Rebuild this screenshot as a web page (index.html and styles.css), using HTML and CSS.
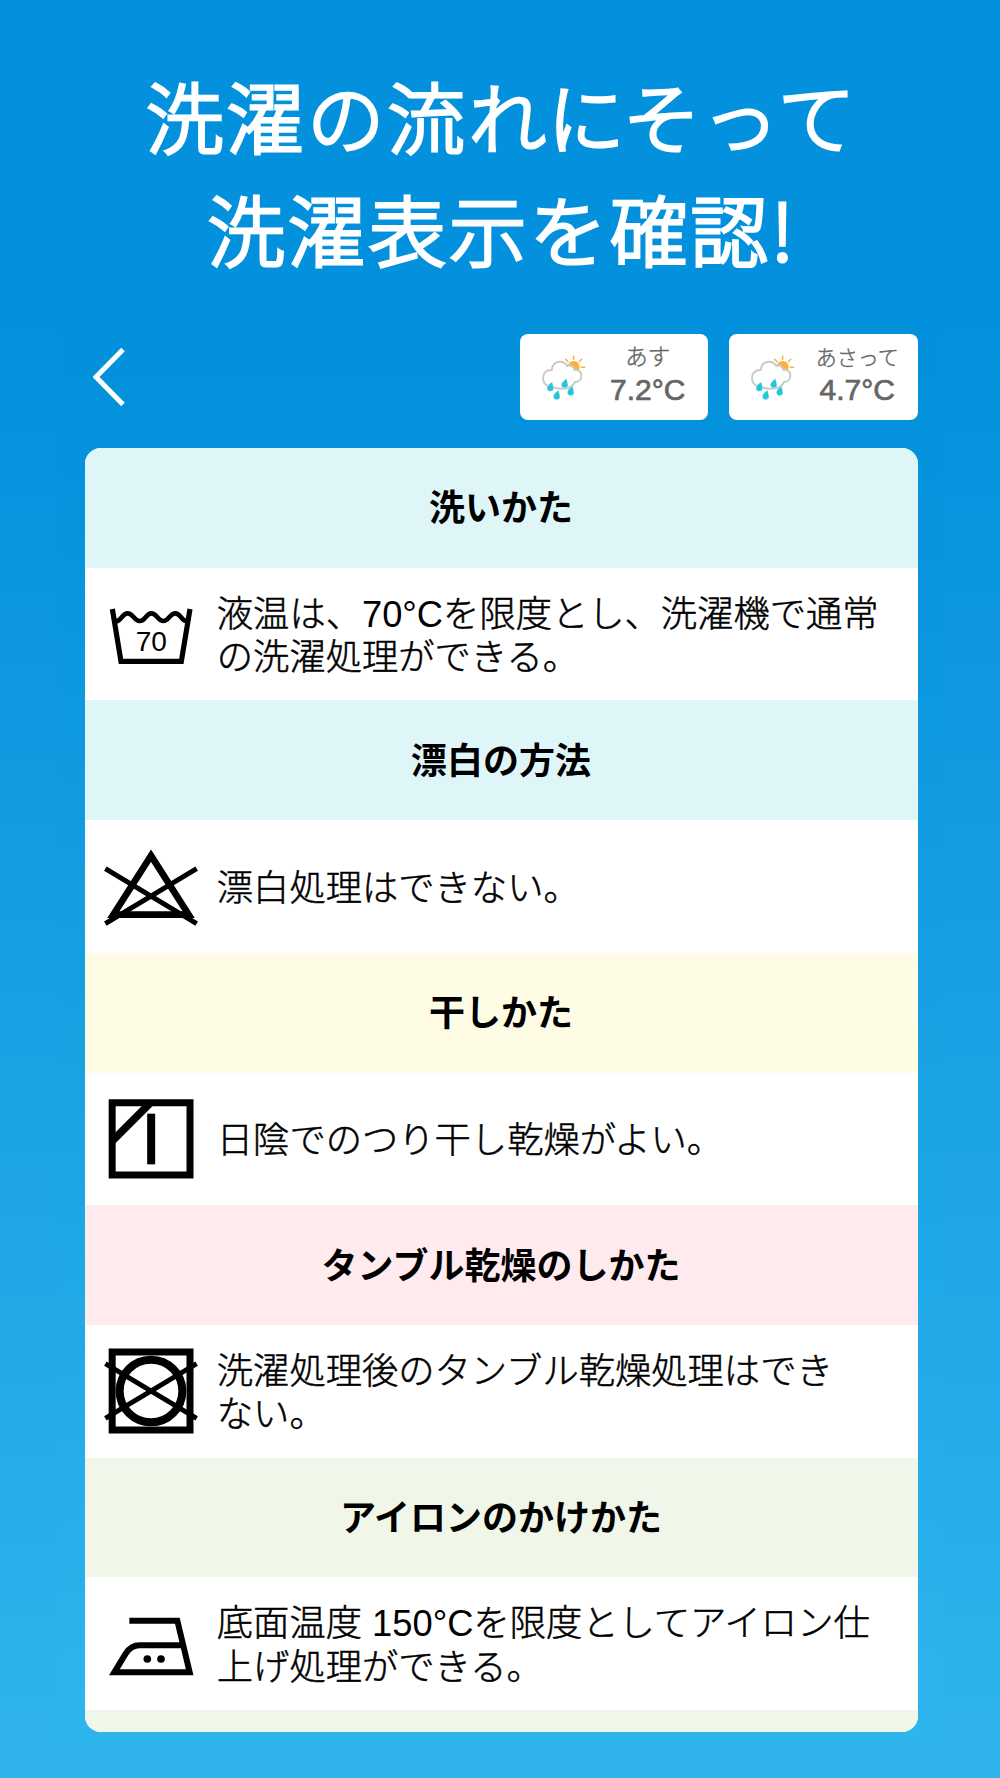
FILE: index.html
```html
<!DOCTYPE html>
<html lang="ja">
<head>
<meta charset="utf-8">
<title>洗濯表示</title>
<link rel="stylesheet" href="styles.css">
</head>
<body>
<svg width="0" height="0" class="defs">
  <symbol id="weather" viewBox="120 100 144 144">
    <g fill="none" stroke="#fbb040" stroke-width="4.500" stroke-linecap="round">
      <path d="M221 110v9M197 119l7 7M245 119l-7 7M244 142.500h10M240 160l4 5"/>
    </g>
    <circle cx="221" cy="142" r="18" fill="#fbb040"/>
    <path d="M152 200C136 198 129 187 129 174C129 160 140 150 155 151C156 136 166 126 179 126C190 126 198 131 202 139C208 135 220 139 223 150C237 149 244 158 244 168C244 180 235 187 225 187C218 203 200 207 189 207C174 207 163 206 152 200Z" fill="#fff" stroke="#c9caca" stroke-width="6"/>
    <g fill="#26c6da" stroke="#fff" stroke-width="1">
      <path id="drop" d="M157 187C148 192 141 199 141 205.500C141 211 145.500 215 151 215C156.500 215 161 211 161 206C161 201 158 194 157 187Z"/>
      <use href="#drop" x="43" y="-10"/>
      <use href="#drop" x="19" y="25"/>
      <use href="#drop" x="61" y="13"/>
    </g>
  </symbol>
</svg>
<main class="page">
  <h1 class="title">
    <span class="title-line first">洗濯の流<span class="kana">れに<span class="wide">そ</span><span class="mid">っ</span>て</span></span>
    <span class="title-line second">洗濯表示を確認!</span>
  </h1>
  <div class="app">
    <header class="bar">
      <svg class="back" viewBox="0 0 32 58"><path d="M30 1.500L3 29L30 56.500" fill="none" stroke="#fff" stroke-width="5"/></svg>
      <div class="forecast">
        <svg class="weather"><use href="#weather"/></svg>
        <div class="reading"><span class="day">あす</span><span class="temp">7.2°C</span></div>
      </div>
      <div class="forecast">
        <svg class="weather"><use href="#weather"/></svg>
        <div class="reading"><span class="day small">あさって</span><span class="temp">4.7°C</span></div>
      </div>
    </header>
    <section class="panel">
      <h2 class="head wash">洗いかた</h2>
      <div class="row">
        <svg class="mark" viewBox="62 72 300 300" fill="none" stroke="#000">
          <path d="M96 147L122 304H303L329 147" stroke-width="15.500"/>
          <path d="M106 184C124 184 124 160 142 160C160 160 160 183 178 183C196 183 196 160 213 160C231 160 231 183 249 183C267 183 267 160 285 160C302 160 302 184 320 184" stroke-width="14"/>
          <text class="degree" x="213" y="272" text-anchor="middle">70</text>
        </svg>
        <p class="desc">液温は、<span class="value">70°C</span>を限度とし、洗濯機で通常<br>の洗濯処理ができる。</p>
      </div>
      <h2 class="head wash">漂白の方法</h2>
      <div class="row">
        <svg class="mark" viewBox="62 50 300 300" fill="none" stroke="#000">
          <path d="M212 109L325 286H99Z" stroke-width="20"/>
          <path d="M75 148L349 313M349 148L75 313" stroke-width="15"/>
        </svg>
        <p class="desc">漂白処理はできない。</p>
      </div>
      <h2 class="head dry">干しかた</h2>
      <div class="row">
        <svg class="mark" viewBox="62 57 300 300" fill="none" stroke="#000">
          <path d="M95.500 98.500H329V315H95.500Z" stroke-width="21"/>
          <path d="M212.500 131V283" stroke-width="24"/>
          <path d="M95 214L212 97" stroke-width="23"/>
        </svg>
        <p class="desc">日陰でのつり干し乾燥がよい。</p>
      </div>
      <h2 class="head tumble">タンブル乾燥のしかた</h2>
      <div class="row">
        <svg class="mark" viewBox="62 64 300 300" fill="none" stroke="#000">
          <path d="M95.500 97H329V331H95.500Z" stroke-width="21"/>
          <circle cx="212" cy="214" r="94" stroke-width="24"/>
          <path d="M75 132L349 296M349 132L75 296" stroke-width="14.500"/>
        </svg>
        <p class="desc">洗濯処理後のタンブル乾燥処理はでき<br>ない。</p>
      </div>
      <h2 class="head iron">アイロンのかけかた</h2>
      <div class="row">
        <svg class="mark" viewBox="62 70 300 300" fill="none" stroke="#000" stroke-width="18">
          <path d="M147 150H291L328 305H102L136 249Q152 224 178 224H306"/>
          <g fill="#000" stroke="none"><circle cx="201" cy="265" r="11.500"/><circle cx="242" cy="265" r="11.500"/></g>
        </svg>
        <p class="desc">底面温度 <span class="value">150°C</span>を限度としてアイロン仕<br>上げ処理ができる。</p>
      </div>
      <div class="head iron next"></div>
    </section>
  </div>
</main>
</body>
</html>
```
FILE: styles.css
```css
* { box-sizing: border-box; }

body {
  margin: 0;
  font-family: "Liberation Sans", "Noto Sans CJK JP", sans-serif;
  color: #000;
}

.defs { display: block; }

.page {
  height: 1778px;
  padding-top: 58px;
  background: linear-gradient(180deg, #0390dc 0, #0390dc 330px, #2fb4ed 1778px);
  overflow: hidden;
}

.title {
  display: flex;
  flex-direction: column;
  margin: 0;
  height: 242px;
  color: #fff;
  font-family: "Noto Sans CJK JP", sans-serif;
  font-size: 77.500px;
  font-weight: 300;
  letter-spacing: 3px;
  line-height: 113px;
  white-space: nowrap;
  -webkit-text-stroke: 3.200px #fff;
}
.first { padding-left: 146px; }
.second { padding-left: 207.500px; }
.kana { font-feature-settings: "palt"; letter-spacing: 2.500px; }
.wide { letter-spacing: 15px; }
.mid { letter-spacing: 9px; }

.app {
  width: 885px;
  height: 1444px;
  margin-left: 58px;
  padding: 34px 25.500px 0 26.500px;
  background: linear-gradient(180deg, #0390dc 0, #0592dc 150px, #2fb5ee 1444px);
}

.bar {
  display: flex;
  align-items: center;
  gap: 21px;
  height: 86.500px;
}
.back {
  width: 32px;
  height: 58px;
  margin: 0 auto 0 8px;
}
.forecast {
  display: flex;
  width: 188.500px;
  height: 86px;
  padding-left: 20px;
  background: #fff;
  border-radius: 8px;
}
.weather {
  width: 48px;
  height: 48px;
  margin-top: 19px;
}
.reading {
  display: flex;
  flex: 1;
  flex-direction: column;
  align-items: center;
  padding: 10px 0 0 0;
  color: #666;
}
.day {
  height: 28px;
  font-size: 22.500px;
  font-weight: 300;
  line-height: 28px;
  -webkit-text-stroke: .4px #666;
}
.day.small { font-size: 21px; line-height: 28px; }
.temp {
  font-size: 30px;
  line-height: 36px;
  -webkit-text-stroke: .7px #666;
}

.panel {
  height: 1284px;
  margin-top: 27.500px;
  overflow: hidden;
  background: #fff;
  border-radius: 16px;
}
.head {
  display: flex;
  align-items: center;
  justify-content: center;
  height: 119.800px;
  margin: 0;
  padding: 0 0 5px 0;
  font-size: 36px;
  font-weight: 700;
}
.wash { background: #dff6f9; }
.dry { background: #fffce6; }
.tumble { background: #ffeaed; }
.iron { background: #f0f6e8; }
.next { height: 22px; }

.row {
  display: flex;
  align-items: center;
  gap: 16px;
  height: 132.600px;
  padding-left: 16.300px;
}
.mark {
  flex: none;
  width: 100px;
  height: 100px;
}
.degree {
  fill: #000;
  stroke: none;
  font-size: 84px;
}
.desc {
  margin: 0;
  padding: 4px 0 0 0;
  font-size: 36.300px;
  font-weight: 300;
  line-height: 43.300px;
  white-space: nowrap;
  -webkit-text-stroke: .5px #000;
}
.value { -webkit-text-stroke: 0; }
```
